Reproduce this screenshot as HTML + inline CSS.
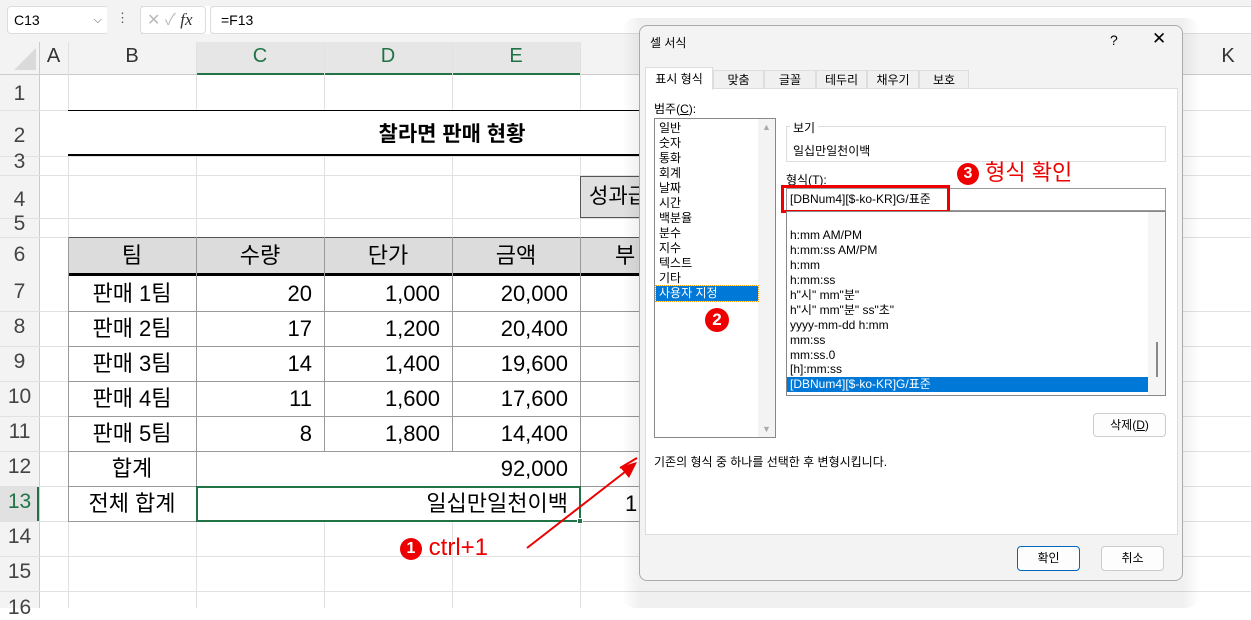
<!DOCTYPE html>
<html><head><meta charset="utf-8">
<style>
*{margin:0;padding:0;box-sizing:border-box}
body{width:1251px;height:608px;overflow:hidden;background:#fff;font-family:"Liberation Sans","Noto Sans CJK KR",sans-serif;position:relative;color:#000}
.a{position:absolute}
.hl{position:absolute;height:1px;background:#e1e1e1}
.vl{position:absolute;width:1px;background:#e1e1e1}
.rn{position:absolute;left:0;width:39px;text-align:center;font-size:21px;color:#444}
.cell{position:absolute;font-size:22px;height:35px;line-height:35px}
.r{text-align:right;padding-right:12px}
.c{text-align:center}
.d{font-size:12px;font-family:"Liberation Sans","Noto Sans CJK KR",sans-serif}
.li{position:absolute;left:4px;font-size:12px;line-height:15px}
.fi{position:absolute;left:3px;font-size:12px;line-height:15px}
</style></head><body>
<!-- top bar -->
<div class="a" style="left:0;top:0;width:1251px;height:42px;background:#f3f3f3"></div>
<div class="a" style="left:7px;top:6px;width:102px;height:28px;background:#fff;border:1px solid #ddd;border-radius:4px;font-size:14px;line-height:26px;padding-left:6px">C13<span style="position:absolute;right:6px;font-size:11px;color:#555">⌵</span></div>
<div class="a" style="left:116px;top:10px;font-size:13px;color:#555">⋮</div>
<div class="a" style="left:107px;top:6px;width:59px;height:28px;background:#fff;border:1px solid #ddd;border-radius:4px;left:107px;margin-left:0"></div>
<div class="a" style="left:140px;top:8px;width:66px;height:26px;background:#fff;border:1px solid #ddd;border-radius:4px;font-size:17px;color:#bbb;line-height:24px;padding-left:5px">✕ ✓ <i style="color:#333;font-family:'Liberation Serif',serif">fx</i></div>
<div class="a" style="left:170px;top:6px;width:40px;height:28px;background:#fff"></div>
<div class="a" style="left:107px;top:6px;width:34px;height:28px;background:#f3f3f3"></div>
<div class="a" style="left:116px;top:10px;font-size:13px;color:#555">⋮</div>
<div class="a" style="left:140px;top:6px;width:66px;height:28px;background:#fff;border:1px solid #ddd;border-radius:4px;font-size:16px;color:#bbb;line-height:26px;padding-left:6px">✕ ✓ <i style="color:#333;font-family:'Liberation Serif',serif;font-size:17px">fx</i></div>
<div class="a" style="left:210px;top:6px;width:1045px;height:28px;background:#fff;border:1px solid #ddd;border-radius:4px;font-size:14px;line-height:26px;padding-left:10px">=F13</div>
<!-- column header -->
<div class="a" style="left:0;top:42px;width:1251px;height:33px;background:#f3f3f3;border-bottom:1px solid #ccc"></div>
<div class="a" style="left:196px;top:42px;width:384px;height:33px;background:#e6e6e6;border-bottom:2px solid #217346"></div>
<div class="a" style="left:14px;top:48px;width:0;height:0;border-left:22px solid transparent;border-bottom:22px solid #dadada"></div>
<div class="a" style="left:39px;top:42px;width:1px;height:566px;background:#ccc"></div>
<div class="a" style="top:45px;left:39px;width:29px;text-align:center;font-size:20px;color:#333">A</div>
<div class="a" style="top:45px;left:68px;width:128px;text-align:center;font-size:20px;color:#333">B</div>
<div class="a" style="top:45px;left:196px;width:128px;text-align:center;font-size:20px;color:#217346">C</div>
<div class="a" style="top:45px;left:324px;width:128px;text-align:center;font-size:20px;color:#217346">D</div>
<div class="a" style="top:45px;left:452px;width:128px;text-align:center;font-size:20px;color:#217346">E</div>
<div class="a" style="top:45px;left:1218px;width:20px;text-align:center;font-size:20px;color:#333">K</div>
<div class="vl" style="left:68px;top:42px;height:566px"></div>
<div class="vl" style="left:196px;top:42px;height:566px"></div>
<div class="vl" style="left:324px;top:42px;height:566px"></div>
<div class="vl" style="left:452px;top:42px;height:566px"></div>
<div class="vl" style="left:580px;top:42px;height:566px"></div>
<!-- row header bg -->
<div class="a" style="left:0;top:75px;width:39px;height:533px;background:#f3f3f3"></div>
<div class="a" style="left:0;top:486px;width:39px;height:35px;background:#e1e1e1;border-right:2px solid #217346"></div>
<!-- row lines -->
<div class="hl" style="left:0;top:110px;width:1251px"></div>
<div class="hl" style="left:0;top:156px;width:1251px"></div>
<div class="hl" style="left:0;top:175px;width:1251px"></div>
<div class="hl" style="left:0;top:218px;width:1251px"></div>
<div class="hl" style="left:0;top:237px;width:1251px"></div>
<div class="hl" style="left:0;top:311px;width:1251px"></div>
<div class="hl" style="left:0;top:346px;width:1251px"></div>
<div class="hl" style="left:0;top:381px;width:1251px"></div>
<div class="hl" style="left:0;top:416px;width:1251px"></div>
<div class="hl" style="left:0;top:451px;width:1251px"></div>
<div class="hl" style="left:0;top:486px;width:1251px"></div>
<div class="hl" style="left:0;top:521px;width:1251px"></div>
<div class="hl" style="left:0;top:556px;width:1251px"></div>
<div class="hl" style="left:0;top:591px;width:1251px"></div>
<div class="rn" style="top:82px">1</div>
<div class="rn" style="top:124px">2</div>
<div class="rn" style="top:150px;height:20px;overflow:hidden">3</div>
<div class="rn" style="top:188px">4</div>
<div class="rn" style="top:212px;height:22px;overflow:hidden">5</div>
<div class="rn" style="top:243px">6</div>
<div class="rn" style="top:280px">7</div>
<div class="rn" style="top:315px">8</div>
<div class="rn" style="top:350px">9</div>
<div class="rn" style="top:385px">10</div>
<div class="rn" style="top:420px">11</div>
<div class="rn" style="top:455px">12</div>
<div class="rn" style="top:490px;color:#217346">13</div>
<div class="rn" style="top:525px">14</div>
<div class="rn" style="top:560px">15</div>
<div class="rn" style="top:596px">16</div>
<!-- title -->
<div class="a" style="left:68px;top:110px;width:572px;height:46px;background:#fff;border-top:1px solid #000;border-bottom:2px solid #000"></div>
<div class="a" style="left:196px;top:118px;width:512px;text-align:center;font-size:21px;font-weight:bold">찰라면 판매 현황</div>
<div class="a" style="left:580px;top:176px;width:60px;height:42px;background:#e0e0e0;border:1px solid #555;font-size:21px;line-height:40px;padding-left:8px;overflow:hidden;white-space:nowrap">성과급</div>
<!-- header row 6 -->
<div class="a" style="left:68px;top:237px;width:572px;height:39px;background:#dcdcdc;border-top:1px solid #555;border-bottom:3px solid #000"></div>
<div class="vl" style="left:196px;top:237px;height:214px;background:#999"></div>
<div class="vl" style="left:324px;top:237px;height:214px;background:#999"></div>
<div class="vl" style="left:452px;top:237px;height:214px;background:#999"></div>
<div class="vl" style="left:580px;top:237px;height:284px;background:#999"></div>
<div class="cell c" style="left:68px;top:238px;width:128px">팀</div>
<div class="cell c" style="left:196px;top:238px;width:128px">수량</div>
<div class="cell c" style="left:324px;top:238px;width:128px">단가</div>
<div class="cell c" style="left:452px;top:238px;width:128px">금액</div>
<div class="cell" style="left:615px;top:238px;width:30px">부</div>
<div class="a" style="left:68px;top:311px;width:572px;height:1px;background:#999"></div>
<div class="a" style="left:68px;top:346px;width:572px;height:1px;background:#999"></div>
<div class="a" style="left:68px;top:381px;width:572px;height:1px;background:#999"></div>
<div class="a" style="left:68px;top:416px;width:572px;height:1px;background:#999"></div>
<div class="a" style="left:68px;top:451px;width:572px;height:1px;background:#999"></div>
<div class="a" style="left:68px;top:486px;width:572px;height:1px;background:#999"></div>
<div class="a" style="left:68px;top:521px;width:572px;height:1px;background:#999"></div>
<div class="vl" style="left:196px;top:451px;height:70px;background:#999"></div>
<div class="vl" style="left:68px;top:237px;height:284px;background:#999"></div>
<div class="cell c" style="left:68px;top:276px;width:128px">판매 1팀</div>
<div class="cell r" style="left:196px;top:276px;width:128px">20</div>
<div class="cell r" style="left:324px;top:276px;width:128px">1,000</div>
<div class="cell r" style="left:452px;top:276px;width:128px">20,000</div>
<div class="cell c" style="left:68px;top:311px;width:128px">판매 2팀</div>
<div class="cell r" style="left:196px;top:311px;width:128px">17</div>
<div class="cell r" style="left:324px;top:311px;width:128px">1,200</div>
<div class="cell r" style="left:452px;top:311px;width:128px">20,400</div>
<div class="cell c" style="left:68px;top:346px;width:128px">판매 3팀</div>
<div class="cell r" style="left:196px;top:346px;width:128px">14</div>
<div class="cell r" style="left:324px;top:346px;width:128px">1,400</div>
<div class="cell r" style="left:452px;top:346px;width:128px">19,600</div>
<div class="cell c" style="left:68px;top:381px;width:128px">판매 4팀</div>
<div class="cell r" style="left:196px;top:381px;width:128px">11</div>
<div class="cell r" style="left:324px;top:381px;width:128px">1,600</div>
<div class="cell r" style="left:452px;top:381px;width:128px">17,600</div>
<div class="cell c" style="left:68px;top:416px;width:128px">판매 5팀</div>
<div class="cell r" style="left:196px;top:416px;width:128px">8</div>
<div class="cell r" style="left:324px;top:416px;width:128px">1,800</div>
<div class="cell r" style="left:452px;top:416px;width:128px">14,400</div>
<div class="a" style="left:197px;top:452px;width:383px;height:34px;background:#fff"></div>
<div class="a" style="left:197px;top:487px;width:383px;height:34px;background:#fff"></div>
<div class="cell c" style="left:68px;top:451px;width:128px">합계</div>
<div class="cell r" style="left:452px;top:451px;width:128px">92,000</div>
<div class="cell c" style="left:68px;top:486px;width:128px">전체 합계</div>
<div class="a" style="left:196px;top:486px;width:385px;height:36px;border:2px solid #217346"></div>
<div class="a" style="left:577px;top:518px;width:6px;height:6px;background:#217346;border:1px solid #fff"></div>
<div class="cell r" style="left:380px;top:486px;width:200px">일십만일천이백</div>
<div class="cell" style="left:625px;top:486px">1</div>
<!-- annotation 1 -->
<div class="a" style="left:400px;top:534px;font-size:24px;color:#e00;line-height:28px"><span style="display:inline-block;width:22px;height:22px;border-radius:50%;background:#e00;color:#fff;font-size:16px;font-weight:bold;text-align:center;line-height:22px;vertical-align:2px">1</span> ctrl+1</div>
<svg class="a" style="left:0;top:0" width="1251" height="608"><line x1="527" y1="548" x2="630" y2="468" stroke="#e00" stroke-width="2"/><polygon points="637,462 620,467 629,478" fill="#e00"/></svg>
<!-- dialog shadow -->
<div class="a" style="left:622px;top:18px;width:578px;height:590px;background:linear-gradient(90deg,rgba(0,0,0,0),rgba(0,0,0,0.06) 3%,rgba(0,0,0,0.06) 97%,rgba(0,0,0,0));border-radius:14px"></div>
<svg class="a" style="left:0;top:0" width="1251" height="608"><line x1="620" y1="468" x2="637" y2="458" stroke="#e00" stroke-width="2"/></svg>
<!-- dialog -->
<div class="a d" style="left:639px;top:25px;width:544px;height:556px;background:#f3f3f3;border:1px solid #aaa;border-radius:8px">
 <div class="a" style="left:10px;top:8px;font-size:12px">셀 서식</div>
 <div class="a" style="left:470px;top:6px;font-size:14px">?</div>
 <div class="a" style="left:512px;top:3px;font-size:17px">✕</div>
 <div class="a" style="left:5px;top:62px;width:533px;height:447px;background:#fff;border:1px solid #ddd"></div>
 <div class="a" style="left:5px;top:41px;width:68px;height:23px;background:#fff;border:1px solid #ddd;border-bottom:none;text-align:center;line-height:22px">표시 형식</div>
 <div class="a" style="left:73px;top:44px;width:51px;height:19px;background:#f0f0f0;border:1px solid #ddd;text-align:center;line-height:18px">맞춤</div>
 <div class="a" style="left:124px;top:44px;width:52px;height:19px;background:#f0f0f0;border:1px solid #ddd;text-align:center;line-height:18px">글꼴</div>
 <div class="a" style="left:176px;top:44px;width:51px;height:19px;background:#f0f0f0;border:1px solid #ddd;text-align:center;line-height:18px">테두리</div>
 <div class="a" style="left:227px;top:44px;width:52px;height:19px;background:#f0f0f0;border:1px solid #ddd;text-align:center;line-height:18px">채우기</div>
 <div class="a" style="left:279px;top:44px;width:50px;height:19px;background:#f0f0f0;border:1px solid #ddd;text-align:center;line-height:18px">보호</div>
 <div class="a" style="left:14px;top:74px">범주(<u>C</u>):</div>
 <div class="a" style="left:14px;top:92px;width:122px;height:320px;border:1px solid #888;background:#fff">
  <div class="a" style="right:0;top:0;width:17px;height:318px;background:#f3f3f3"><div style="text-align:center;color:#aaa;font-size:9px;margin-top:3px">▲</div><div style="position:absolute;bottom:3px;width:17px;text-align:center;color:#aaa;font-size:9px">▼</div></div>
  <div class="li" style="top:2px">일반</div><div class="li" style="top:17px">숫자</div><div class="li" style="top:32px">통화</div><div class="li" style="top:47px">회계</div><div class="li" style="top:62px">날짜</div><div class="li" style="top:77px">시간</div><div class="li" style="top:92px">백분율</div><div class="li" style="top:107px">분수</div><div class="li" style="top:122px">지수</div><div class="li" style="top:137px">텍스트</div><div class="li" style="top:152px">기타</div>
  <div class="li" style="top:167px;left:1px;width:102px;background:#0078d7;color:#fff;padding-left:3px;outline:1px dotted #f90">사용자 지정</div>
  <div class="a" style="left:50px;top:189px;width:24px;height:24px;border-radius:50%;background:#e00;color:#fff;font-size:17px;font-weight:bold;text-align:center;line-height:24px">2</div>
 </div>
 <div class="a" style="left:146px;top:100px;width:380px;height:36px;border:1px solid #ddd"></div>
 <div class="a" style="left:150px;top:93px;background:#fff;padding:0 3px">보기</div>
 <div class="a" style="left:153px;top:116px">일십만일천이백</div>
 <div class="a" style="left:146px;top:145px">형식(<u>T</u>):</div>
 <div class="a" style="left:146px;top:162px;width:380px;height:23px;border:1px solid #999;background:#fff;padding-left:3px;line-height:21px">[DBNum4][$-ko-KR]G/표준</div>
 <div class="a" style="left:141px;top:159px;width:169px;height:28px;border:3px solid #e00"></div>
 <div class="a" style="left:317px;top:133px;font-size:22px;color:#e00;line-height:28px"><span style="display:inline-block;width:22px;height:22px;border-radius:50%;background:#e00;color:#fff;font-size:16px;font-weight:bold;text-align:center;line-height:22px;vertical-align:2px">3</span> 형식 확인</div>
 <div class="a" style="left:146px;top:185px;width:380px;height:185px;border:1px solid #888;background:#fff">
  <div class="a" style="right:0;top:0;width:17px;height:183px;background:#f5f5f5"><div style="position:absolute;left:8px;top:130px;width:2px;height:35px;background:#888"></div></div>
  <div class="fi" style="top:16px">h:mm AM/PM</div><div class="fi" style="top:31px">h:mm:ss AM/PM</div><div class="fi" style="top:46px">h:mm</div><div class="fi" style="top:61px">h:mm:ss</div><div class="fi" style="top:76px">h"시" mm"분"</div><div class="fi" style="top:91px">h"시" mm"분" ss"초"</div><div class="fi" style="top:106px">yyyy-mm-dd h:mm</div><div class="fi" style="top:121px">mm:ss</div><div class="fi" style="top:136px">mm:ss.0</div><div class="fi" style="top:151px">@</div><div class="fi" style="top:166px;height:15px;overflow:hidden">[h]:mm:ss</div>
  <div class="fi" style="top:181px;left:1px;width:361px;background:#0078d7;color:#fff;padding-left:2px;display:none"></div>
 </div>
 <div class="a" style="left:147px;top:351px;width:361px;height:15px;background:#0078d7;color:#fff;padding-left:3px;line-height:15px">[DBNum4][$-ko-KR]G/표준</div>
 <div class="a" style="left:147px;top:336px;width:361px;height:15px;background:#fff;padding-left:3px;line-height:15px">[h]:mm:ss</div>
 <div class="a" style="left:453px;top:387px;width:73px;height:24px;border:1px solid #ccc;border-radius:4px;background:#fdfdfd;text-align:center;line-height:22px">삭제(<u>D</u>)</div>
 <div class="a" style="left:14px;top:427px">기존의 형식 중 하나를 선택한 후 변형시킵니다.</div>
 <div class="a" style="left:377px;top:520px;width:63px;height:25px;border:1px solid #0067c0;border-radius:4px;background:#fdfdfd;text-align:center;line-height:23px">확인</div>
 <div class="a" style="left:461px;top:520px;width:63px;height:25px;border:1px solid #ccc;border-radius:4px;background:#fdfdfd;text-align:center;line-height:23px">취소</div>
</div>
</body></html>
